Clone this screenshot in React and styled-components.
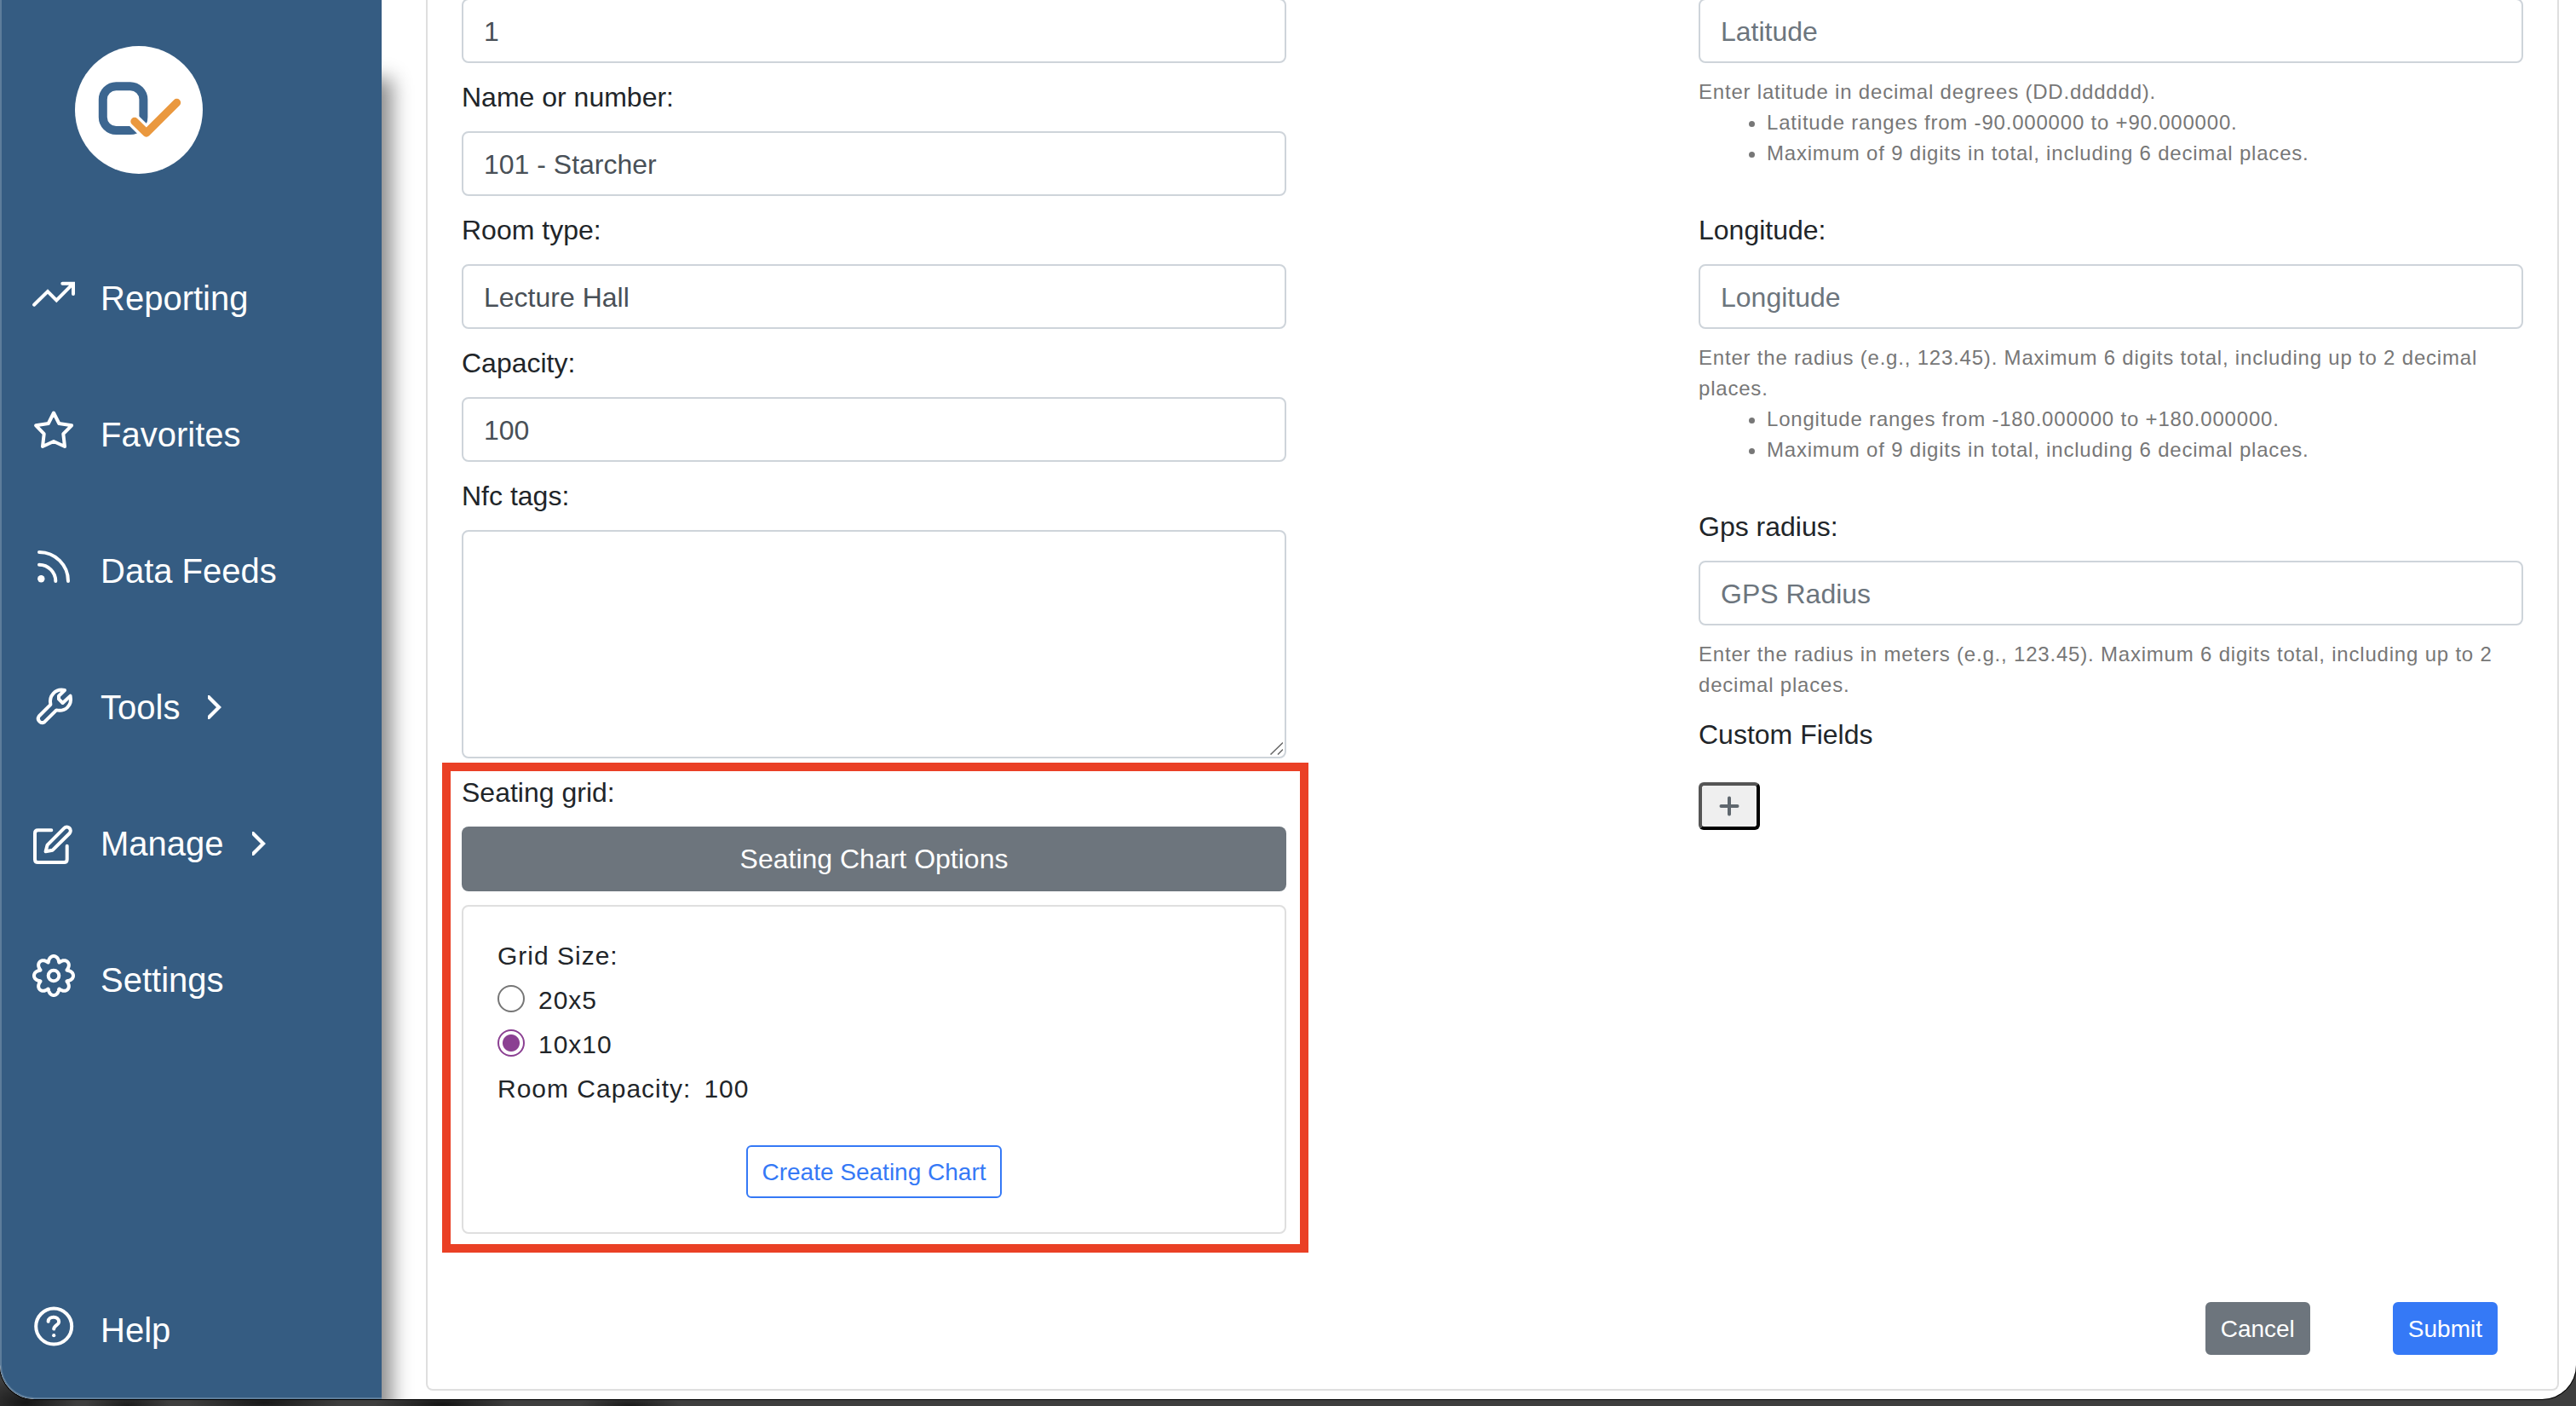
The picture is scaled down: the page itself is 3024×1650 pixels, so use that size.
import React from "react";
import styled, { createGlobalStyle } from "styled-components";

const GlobalStyle = createGlobalStyle`
    * {
        box-sizing: border-box;
    }
    body {
        margin: 0;
        overflow: hidden;
        background: #3c3c3c;
        font-family: "Liberation Sans", Arial, Helvetica, sans-serif;
        font-size: 32px;
        line-height: 48px;
        color: #212529;
    }
    input, textarea, button {
        font-family: inherit;
        margin: 0;
    }
`;
const Desktop = styled.div`
    height: 1650px;
    overflow: hidden;
    background:
        radial-gradient(60px 30px at 30px 1646px, #161616, transparent),
        radial-gradient(50px 20px at 150px 1650px, #1c1c1c, transparent),
        radial-gradient(90px 16px at 310px 1646px, #181818, transparent),
        radial-gradient(80px 14px at 520px 1648px, #141414, transparent),
        radial-gradient(60px 14px at 740px 1650px, #191919, transparent),
        #3e3e3e;
`;
const Window = styled.div`
    display: flex;
    height: 1642px;
    background: #fff;
    border-radius: 0 0 40px 40px;
    box-shadow: 0 0 0 1px #000;
    overflow: hidden;
`;
const Sidebar = styled.div`
    width: 448px;
    flex-shrink: 0;
    display: flex;
    flex-direction: column;
    position: relative;
    z-index: 1;
    color: #fff;
    background: #355c82;
    border-left: 2px solid #5d7d9b;
    border-bottom: 2px solid #5d7d9b;
    border-bottom-left-radius: 40px;
    &::after {
        content: "";
        position: absolute;
        z-index: -1;
        top: 92px;
        right: 0;
        bottom: -30px;
        width: 100px;
        box-shadow: 12px 0 22px rgba(0, 0, 0, .46);
        clip-path: inset(-40px -60px 0 100px);
    }
`;
const Logo = styled.svg`
    width: 150px;
    height: 150px;
    margin: 54px 0 67px 86px;
    flex-shrink: 0;
`;
const NavItem = styled.a`
    height: 160px;
    display: flex;
    align-items: center;
    padding-left: 33px;
    font-size: 40px;
    &.bottom {
        height: 156px;
        margin-top: auto;
    }
    .text {
        margin-left: 27px;
        padding-bottom: 2px;
    }
`;
const NavIcon = styled.svg`
    width: 56px;
    height: 56px;
    fill: none;
    stroke: #fff;
    stroke-width: 4;
    stroke-linecap: round;
    stroke-linejoin: round;
    overflow: visible;
`;
const Chevron = styled.svg`
    width: 16px;
    height: 28px;
    margin: 0 0 2px 33px;
    fill: none;
    stroke: #fff;
    stroke-width: 4.2;
`;
const Main = styled.div`
    flex: 1;
    padding: 0 20px 10px 52px;
`;
const Card = styled.div`
    height: 100%;
    display: flex;
    flex-direction: column;
    justify-content: space-between;
    border: 2px solid #dfdfdf;
    border-top: none;
    border-radius: 0 0 8px 8px;
    padding: 0 40px 40px;
`;
const Columns = styled.div`
    display: flex;
    justify-content: space-between;
    margin-top: -2px;
`;
const Column = styled.div`
    width: 968px;
`;
const Label = styled.label`
    display: block;
    margin: 16px 0;
`;
const Input = styled.input`
    display: block;
    width: 100%;
    height: 76px;
    padding: 13px 24px 11px;
    border: 2px solid #ced4da;
    border-radius: 8px;
    background: #fff;
    color: #495057;
    font-size: 32px;
    outline: none;
    &::placeholder {
        color: #6c757d;
        opacity: 1;
    }
`;
const TextareaBox = styled.div`
    position: relative;
    textarea {
        display: block;
        width: 100%;
        height: 268px;
        border: 2px solid #ced4da;
        border-radius: 8px;
        background: #fff;
        resize: none;
        outline: none;
    }
    svg {
        position: absolute;
        right: 4px;
        bottom: 4px;
        width: 16px;
        height: 16px;
        stroke: #666;
        stroke-width: 1.5;
    }
`;
const Hint = styled.div`
    margin-top: 16px;
    margin-bottom: ${props => props.$last ? 0 : 48}px;
    font-size: 24px;
    line-height: 36px;
    letter-spacing: .8px;
    color: #777;
    ul {
        margin: 0;
        padding-left: 80px;
    }
`;
const Seating = styled.div`
    position: relative;
    margin-top: 16px;
`;
const Highlight = styled.div`
    position: absolute;
    top: -11px;
    left: -23px;
    right: -26px;
    bottom: -22px;
    border: 10px solid #ea4025;
    pointer-events: none;
`;
const Toggle = styled.button`
    display: block;
    width: 100%;
    height: 76px;
    border: none;
    border-radius: 8px;
    background: #6d757d;
    color: #fff;
    font-size: 32px;
`;
const Panel = styled.div`
    margin-top: 16px;
    height: 386px;
    padding: 32px 40px 40px;
    border: 2px solid #dfdfdf;
    border-radius: 8px;
    font-size: 30px;
    line-height: 52px;
    letter-spacing: 1px;
    text-align: left;
`;
const Option = styled.label`
    display: flex;
    align-items: center;
    height: 52px;
`;
const Radio = styled.input`
    appearance: none;
    width: 32px;
    height: 32px;
    margin: 0 16px 4px 0;
    border: 2px solid #767676;
    border-radius: 50%;
    background: #fff;
    &:checked {
        border-color: #8b4092;
        background: radial-gradient(circle, #8b4092 9.5px, #fff 10.5px);
    }
`;
const Capacity = styled.span`
    margin-left: 15px;
`;
const Actions = styled.div`
    display: flex;
    justify-content: ${props => props.$end ? "flex-end" : "center"};
    gap: 97px;
    padding-right: ${props => props.$end ? 30 : 0}px;
    margin-top: ${props => props.$end ? 0 : 40}px;
`;
const Button = styled.button`
    height: 62px;
    min-width: 123px;
    padding: 1px 16px 0;
    border: 2px solid ${props => props.$border};
    border-radius: 6px;
    background: ${props => props.$bg};
    color: ${props => props.$color || "#fff"};
    font-size: 28px;
    line-height: 42px;
    white-space: nowrap;
`;
const AddButton = styled.button`
    display: flex;
    align-items: center;
    justify-content: center;
    width: 72px;
    height: 56px;
    margin-top: 32px;
    padding: 0;
    border: 4px solid;
    border-color: #555 #000 #000 #555;
    border-radius: 6px;
    background: #efefef;
    svg {
        width: 24px;
        height: 24px;
        stroke: #5f676e;
        stroke-width: 4;
        stroke-linecap: round;
    }
`;

// eight lobed cog outline, lobes widened so that they end round
const cogPath = () => {
    const points = [];
    for (let i = 0; i < 240; i++) {
        const a = i / 240 * Math.PI * 2;
        const r = 19.9 + 3.1 * Math.cos(8 * a);
        const t = a + 0.075 * Math.sin(8 * a);
        points.push(`${(28 + r * Math.cos(t)).toFixed(2)} ${(22 + r * Math.sin(t)).toFixed(2)}`);
    }
    return `M${points.join("L")}Z`;
};

const menu = [
    {
        text: "Reporting",
        icon: <path d="M5 34.7L21 19l10.3 10.3L50 10.6M38.3 9.7H51V22" strokeLinejoin="miter" />
    },
    {
        text: "Favorites",
        icon: <path d="M28 1.5L34.3 14l14.8 2.3L39.3 26.2 41 41l-13-6-13 6 1.7-14.8L7.2 16.3 21.8 14z" />
    },
    {
        text: "Data Feeds",
        icon: (
            <React.Fragment>
                <path d="M11 5a34 34 0 0 1 34 34M11 19.7A19.4 19.4 0 0 1 30.3 39" />
                <circle cx="13.3" cy="36.3" r="4.2" fill="#fff" stroke="none" />
            </React.Fragment>
        )
    },
    {
        text: "Tools",
        more: true,
        icon: <path d="M10.7 37.5L24.4 23.8C22.2 14 29.5 4.6 41 7L34 13.8v3.6L38.6 22 47.6 13.6C50 25 41.5 32.5 31.2 30.4L17.3 44.2A4.8 4.8 0 0 1 10.7 37.5z" />
    },
    {
        text: "Manage",
        more: true,
        icon: (
            <React.Fragment>
                <path d="M25.3 11.3H9.5Q6 11.3 6 14.8V45.4Q6 48.9 9.5 48.9H40.2Q43.7 48.9 43.7 45.4V29.7" />
                <path d="M20.6 28.6L40.3 8.9A4.3 4.3 0 0 1 46.6 15L26.8 34.7 18.6 36.3z" />
            </React.Fragment>
        )
    },
    {
        text: "Settings",
        icon: (
            <React.Fragment>
                <path d={cogPath()} />
                <circle cx="28" cy="22" r="6.3" />
            </React.Fragment>
        )
    }
];

const help = {
    text: "Help",
    icon: (
        <React.Fragment>
            <circle cx="28.2" cy="22.6" r="21" />
            <path d="M21.6 16.8C22 10 34 10 34.2 17.2C34.2 21 28.4 21.4 28.2 25.6" />
            <circle cx="28.2" cy="33.2" r="2.1" fill="#fff" stroke="none" />
        </React.Fragment>
    )
};

function MenuItem({ data, className }) {
    return (
        <NavItem className={className}>
            <NavIcon viewBox="0 0 56 56">{data.icon}</NavIcon>
            <span className="text">{data.text}</span>
            {
                data.more ?
                    <Chevron viewBox="0 0 16 28"><path d="M-1 0L13 14L-1 28" /></Chevron>
                    :
                    null
            }
        </NavItem>
    );
}

function RoomForm() {
    return (
        <Column>
            <Input defaultValue="1" />
            <Label>Name or number:</Label>
            <Input defaultValue="101 - Starcher" />
            <Label>Room type:</Label>
            <Input defaultValue="Lecture Hall" />
            <Label>Capacity:</Label>
            <Input defaultValue="100" />
            <Label>Nfc tags:</Label>
            <TextareaBox>
                <textarea />
                <svg viewBox="0 0 16 16"><path d="M1.5 15.5L16 1.5M10 15.5L16 9.5" /></svg>
            </TextareaBox>
            <Seating>
                <Label>Seating grid:</Label>
                <Toggle>Seating Chart Options</Toggle>
                <Panel>
                    <div>Grid Size:</div>
                    <Option><Radio type="radio" name="grid" />20x5</Option>
                    <Option><Radio type="radio" name="grid" defaultChecked />10x10</Option>
                    <div>Room Capacity:<Capacity>100</Capacity></div>
                    <Actions>
                        <Button $bg="#fff" $border="#3579f6" $color="#3579f6">Create Seating Chart</Button>
                    </Actions>
                </Panel>
                <Highlight />
            </Seating>
        </Column>
    );
}

function LocationForm() {
    return (
        <Column>
            <Input placeholder="Latitude" />
            <Hint>
                Enter latitude in decimal degrees (DD.dddddd).
                <ul>
                    <li>Latitude ranges from -90.000000 to +90.000000.</li>
                    <li>Maximum of 9 digits in total, including 6 decimal places.</li>
                </ul>
            </Hint>
            <Label>Longitude:</Label>
            <Input placeholder="Longitude" />
            <Hint>
                Enter the radius (e.g., 123.45). Maximum 6 digits total, including up to 2 decimal places.
                <ul>
                    <li>Longitude ranges from -180.000000 to +180.000000.</li>
                    <li>Maximum of 9 digits in total, including 6 decimal places.</li>
                </ul>
            </Hint>
            <Label>Gps radius:</Label>
            <Input placeholder="GPS Radius" />
            <Hint $last>
                Enter the radius in meters (e.g., 123.45). Maximum 6 digits total, including up to 2 decimal places.
            </Hint>
            <Label>Custom Fields</Label>
            <AddButton>
                <svg viewBox="0 0 24 24"><path d="M12 2.5v19M2.5 12h19" /></svg>
            </AddButton>
        </Column>
    );
}

export default function App() {
    return (
        <Desktop>
            <GlobalStyle />
            <Window>
                <Sidebar>
                    <Logo viewBox="0 0 150 150" fill="none" strokeLinecap="round" strokeLinejoin="round">
                        <circle cx="75" cy="75" r="75" fill="#fff" />
                        <rect x="32.8" y="47.2" width="47.6" height="51.8" rx="15.5" stroke="#3c6690" strokeWidth="10" />
                        <path d="M70 88.5L83.8 102L119.5 66.5" stroke="#fff" strokeWidth="16" />
                        <path d="M70 88.5L83.8 102L119.5 66.5" stroke="#ea983e" strokeWidth="9.4" />
                    </Logo>
                    {
                        menu.map((item, i) => {
                            return (<MenuItem data={item} key={i} />);
                        })
                    }
                    <MenuItem data={help} className="bottom" />
                </Sidebar>
                <Main>
                    <Card>
                        <Columns>
                            <RoomForm />
                            <LocationForm />
                        </Columns>
                        <Actions $end>
                            <Button $bg="#6d757d" $border="#6d757d">Cancel</Button>
                            <Button $bg="#3579f6" $border="#3579f6">Submit</Button>
                        </Actions>
                    </Card>
                </Main>
            </Window>
        </Desktop>
    );
}
